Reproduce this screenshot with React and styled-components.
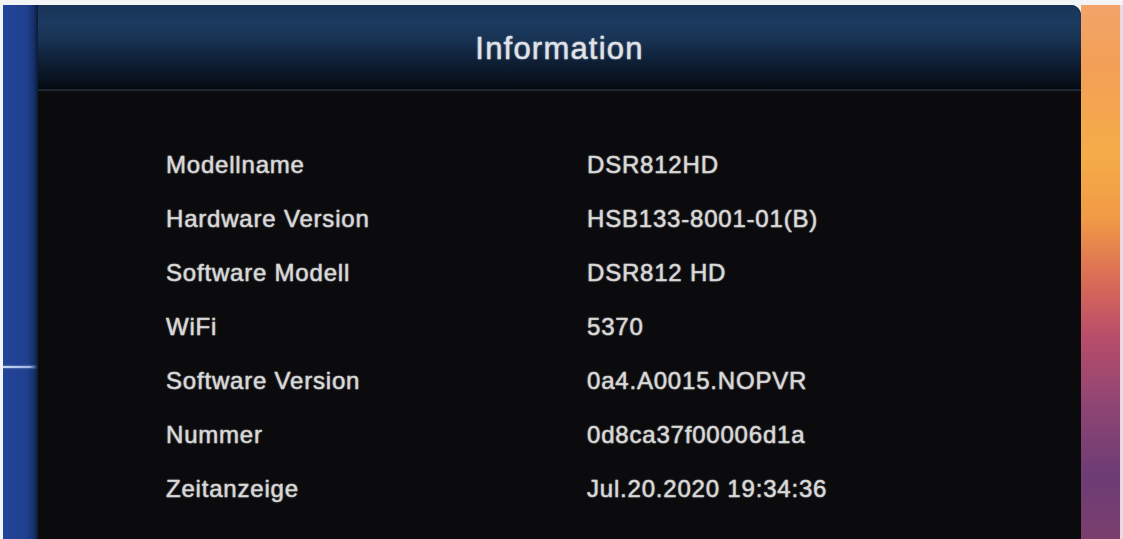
import React from "react";
import styled, { createGlobalStyle } from "styled-components";

const Global = createGlobalStyle`
  html, body { margin: 0; padding: 0; background: #f4f6f8; }
  #root { width: 1123px; height: 539px; overflow: hidden; }
`;

const Screen = styled.div`
  width: 1123px;
  height: 539px;
  padding-top: 5px;
  box-sizing: border-box;
  display: flex;
  background: #f2f4f6;
  font-family: "Liberation Sans", Arial, sans-serif;
`;

const SideRail = styled.div`
  width: 35px;
  margin-left: 3px;
  display: flex;
  flex-direction: column;
  background: linear-gradient(90deg, #24449a 0%, #1f3f8e 70%, #16306a 88%, #0c1a35 100%);
`;

const RailMarker = styled.div`
  margin-top: 361px;
  height: 2px;
  width: 33px;
  background: linear-gradient(90deg, #c8d8f0, #9eb8e6 80%, rgba(150,180,230,0.2));
  box-shadow: 0 0 2px rgba(190, 210, 245, 0.8);
`;

const Panel = styled.div`
  width: 1043px;
  display: flex;
  flex-direction: column;
  background: #0b0b0d;
  border-top-right-radius: 10px;
  overflow: hidden;
`;

const Header = styled.div`
  height: 84px;
  display: flex;
  align-items: center;
  justify-content: center;
  padding-top: 4px;
  box-sizing: border-box;
  background: linear-gradient(180deg, #183458 0%, #1c3b60 22%, #163050 45%, #0d1d31 72%, #070c14 100%);
  border-bottom: 1px solid #05070a;
`;

const HeaderLine = styled.div`
  height: 2px;
  background: #1a2837;
`;

const Title = styled.h1`
  margin: 0;
  font-size: 31px;
  font-weight: 400;
  letter-spacing: 1.2px;
  color: #e2e4e8;
  -webkit-text-stroke: 0.4px #d8dce2;
  text-shadow: 0 0 2px rgba(230, 235, 240, 0.6);
`;

const Body = styled.div`
  flex: 1;
  padding: 47px 0 0 128px;
  display: grid;
  grid-template-columns: 421px 1fr;
  grid-auto-rows: 54px;
  align-content: start;
`;

const Cell = styled.div`
  display: flex;
  align-items: center;
  font-size: 24px;
  letter-spacing: 0.8px;
  color: #dcdcdc;
  -webkit-text-stroke: 0.45px #d0d0d0;
  text-shadow: 0 0 2px rgba(220, 220, 220, 0.55);
  white-space: nowrap;
`;

const RightArt = styled.div`
  flex: 1;
  background: linear-gradient(180deg, #f2a468 0%, #f3a056 12%, #f5ac48 28%, #f09a45 40%, #d86a58 52%, #b84d6a 62%, #8f4573 75%, #6d3c74 88%, #7a3f6e 100%);
  border-right: 3px solid #eadbe3;
`;

const rows = [
  ["Modellname", "DSR812HD"],
  ["Hardware Version", "HSB133-8001-01(B)"],
  ["Software Modell", "DSR812 HD"],
  ["WiFi", "5370"],
  ["Software Version", "0a4.A0015.NOPVR"],
  ["Nummer", "0d8ca37f00006d1a"],
  ["Zeitanzeige", "Jul.20.2020 19:34:36"],
];

export default function App() {
  return (
    <>
      <Global />
      <Screen>
        <SideRail>
          <RailMarker />
        </SideRail>
        <Panel>
          <Header>
            <Title>Information</Title>
          </Header>
          <HeaderLine />
          <Body>
            {rows.map(([k, v]) => (
              <React.Fragment key={k}>
                <Cell>{k}</Cell>
                <Cell>{v}</Cell>
              </React.Fragment>
            ))}
          </Body>
        </Panel>
        <RightArt />
      </Screen>
    </>
  );
}
